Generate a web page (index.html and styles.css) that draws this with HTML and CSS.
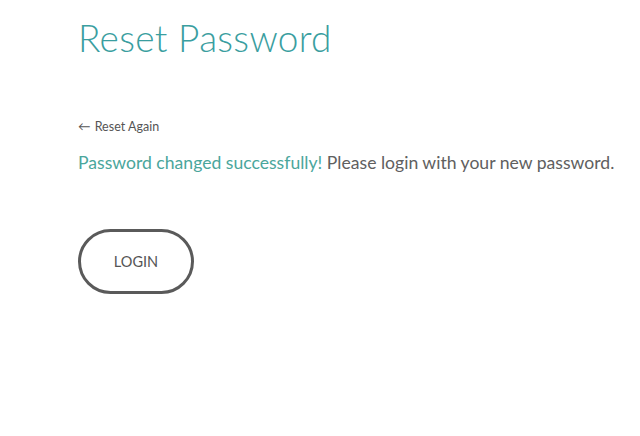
FILE: index.html
```html
<!DOCTYPE html>
<html>
<head>
<meta charset="utf-8">
<link rel="stylesheet" href="styles.css">
</head>
<body>
<main class="page">
  <h1 class="title">Reset Password</h1>
  <a class="back" href="#"><span class="arrow">&larr;</span> Reset Again</a>
  <p class="message"><span class="success">Password changed successfully!</span> Please login with your new password.</p>
  <button class="login">LOGIN</button>
</main>
</body>
</html>
```
FILE: styles.css
```css
html, body {
  margin: 0;
  padding: 0;
  background: #ffffff;
}
body {
  font-family: Lato, "Noto Sans", sans-serif;
  color: #555;
}
.page {
  padding: 14px 0 0 78px;
  display: flex;
  flex-direction: column;
  align-items: flex-start;
}
.title {
  margin: 0;
  font-size: 37px;
  font-weight: 300;
  line-height: 48px;
  color: #3a9ea0;
  letter-spacing: 0.3px;
}
.back {
  margin-top: 57px;
  font-size: 12.5px;
  line-height: 16px;
  color: #555;
  text-decoration: none;
}
.arrow {
  margin-right: 1px;
}
.message {
  margin: 17px 0 0;
  font-size: 17.6px;
  line-height: 22px;
  color: #606060;
  white-space: nowrap;
}
.success {
  color: #4aa69c;
}
.login {
  margin-top: 55px;
  width: 116px;
  height: 65px;
  border: 3px solid #5a5a5a;
  border-radius: 33px;
  background: #fff;
  font-family: Lato, "Noto Sans", sans-serif;
  font-size: 14.5px;
  color: #555;
  padding: 0;
}
```
